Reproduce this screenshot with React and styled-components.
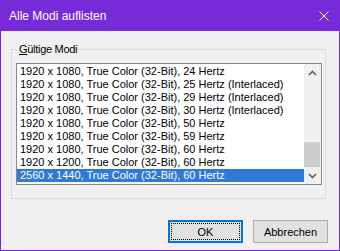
import styled, { createGlobalStyle } from "styled-components";

const GlobalStyle = createGlobalStyle`
  html, body {
    margin: 0;
    padding: 0;
    background: #f0f0f0;
  }
  body {
    font-family: "Liberation Sans", Arial, sans-serif;
    color: #000;
  }
`;

const Window = styled.div`
  width: 340px;
  height: 251px;
  box-sizing: border-box;
  border: 1px solid #772bd8;
  background: #f0f0f0;
  display: flex;
  flex-direction: column;
`;

const TitleBar = styled.div`
  height: 30px;
  background: #772bd8;
  color: #fff;
  display: flex;
  align-items: center;
  justify-content: space-between;
  padding: 0 10px 0 8px;
  font-size: 12px;
`;

const Content = styled.div`
  flex: 1;
  display: flex;
  flex-direction: column;
  padding: 18px 11px 0 10px;
`;

const GroupBox = styled.div`
  position: relative;
  height: 150px;
  box-sizing: border-box;
  margin-right: 2px;
  border: 1px solid #dcdcdc;
  padding: 13px 3px 13px 4px;
`;

const GroupLabel = styled.span`
  position: absolute;
  left: 6px;
  top: -8px;
  padding: 0 1px;
  background: #f0f0f0;
  font-size: 11px;
  line-height: 15px;
  letter-spacing: -0.3px;
`;

const ListBox = styled.div`
  height: 122px;
  box-sizing: border-box;
  border: 1px solid #828790;
  background: #fff;
  display: flex;
`;

const Rows = styled.div`
  flex: 1;
  padding-top: 1px;
  overflow: hidden;
`;

const Row = styled.div`
  height: 13px;
  line-height: 13px;
  font-size: 11px;
  padding-left: 3px;
  white-space: nowrap;
  background: ${(p) => (p.$selected ? "#3079d6" : "transparent")};
  color: ${(p) => (p.$selected ? "#fff" : "#000")};
`;

const ScrollBar = styled.div`
  width: 17px;
  background: #f0f0f0;
  display: flex;
  flex-direction: column;
`;

const ArrowButton = styled.div`
  height: 17px;
  display: flex;
  align-items: center;
  justify-content: center;
`;

const Track = styled.div`
  flex: 1;
  display: flex;
  flex-direction: column;
  justify-content: flex-end;
`;

const Thumb = styled.div`
  height: 25px;
  margin-right: 1px;
  background: #cdcdcd;
`;

const ButtonRow = styled.div`
  display: flex;
  justify-content: flex-end;
  gap: 10px;
  margin-top: 21px;
`;

const Button = styled.button`
  width: 75px;
  height: 23px;
  box-sizing: border-box;
  margin: 0;
  padding: 0;
  background: #e1e1e1;
  border: 1px solid ${(p) => (p.$default ? "#0078d7" : "#adadad")};
  box-shadow: ${(p) => (p.$default ? "inset 0 0 0 1px #0078d7" : "none")};
  outline: ${(p) => (p.$default ? "1px dotted #000" : "none")};
  outline-offset: -4px;
  font-family: "Liberation Sans", Arial, sans-serif;
  font-size: 11px;
  color: #000;
`;

const modes = [
  "1920 x 1080, True Color (32-Bit), 24 Hertz",
  "1920 x 1080, True Color (32-Bit), 25 Hertz (Interlaced)",
  "1920 x 1080, True Color (32-Bit), 29 Hertz (Interlaced)",
  "1920 x 1080, True Color (32-Bit), 30 Hertz (Interlaced)",
  "1920 x 1080, True Color (32-Bit), 50 Hertz",
  "1920 x 1080, True Color (32-Bit), 59 Hertz",
  "1920 x 1080, True Color (32-Bit), 60 Hertz",
  "1920 x 1200, True Color (32-Bit), 60 Hertz",
  "2560 x 1440, True Color (32-Bit), 60 Hertz",
];

function Chevron({ up }) {
  return (
    <svg width="9" height="6" viewBox="0 0 9 6">
      <polyline
        points={up ? "1,5 4.5,1.5 8,5" : "1,1 4.5,4.5 8,1"}
        fill="none"
        stroke="#606060"
        strokeWidth="1.6"
      />
    </svg>
  );
}

function App() {
  return (
    <>
      <GlobalStyle />
      <Window>
        <TitleBar>
          <span>Alle Modi auflisten</span>
          <svg width="10" height="10" viewBox="0 0 10 10">
            <path d="M0.5 0.5 L9.5 9.5 M9.5 0.5 L0.5 9.5" stroke="#fff" strokeWidth="1" />
          </svg>
        </TitleBar>
        <Content>
          <GroupBox>
            <GroupLabel>
              <u>G</u>ültige Modi
            </GroupLabel>
            <ListBox>
              <Rows>
                {modes.map((m, i) => (
                  <Row key={i} $selected={i === modes.length - 1}>
                    {m}
                  </Row>
                ))}
              </Rows>
              <ScrollBar>
                <ArrowButton>
                  <Chevron up />
                </ArrowButton>
                <Track>
                  <Thumb />
                </Track>
                <ArrowButton>
                  <Chevron />
                </ArrowButton>
              </ScrollBar>
            </ListBox>
          </GroupBox>
          <ButtonRow>
            <Button $default>OK</Button>
            <Button>Abbrechen</Button>
          </ButtonRow>
        </Content>
      </Window>
    </>
  );
}

export default App;
